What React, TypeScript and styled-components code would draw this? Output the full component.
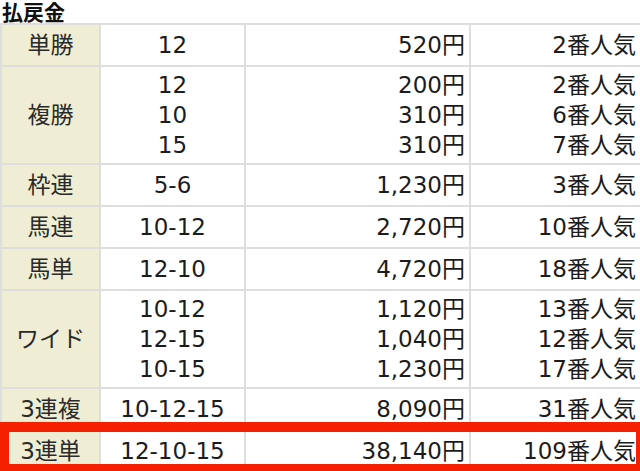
import React from 'react';
import styled, { createGlobalStyle } from 'styled-components';

const GlobalStyle = createGlobalStyle`
	html, body {
		margin: 0;
		padding: 0;
		background: #ffffff;
	}
	body {
		font-family: 'DejaVu Sans', 'Noto Sans CJK JP', sans-serif;
		color: #222;
	}
`;

interface Payout {
	type: string;
	combos: string[];
	amounts: string[];
	ranks: string[];
}

const payouts: Payout[] = [
	{ type: '単勝', combos: ['12'], amounts: ['520円'], ranks: ['2番人気'] },
	{
		type: '複勝',
		combos: ['12', '10', '15'],
		amounts: ['200円', '310円', '310円'],
		ranks: ['2番人気', '6番人気', '7番人気'],
	},
	{ type: '枠連', combos: ['5-6'], amounts: ['1,230円'], ranks: ['3番人気'] },
	{ type: '馬連', combos: ['10-12'], amounts: ['2,720円'], ranks: ['10番人気'] },
	{ type: '馬単', combos: ['12-10'], amounts: ['4,720円'], ranks: ['18番人気'] },
	{
		type: 'ワイド',
		combos: ['10-12', '12-15', '10-15'],
		amounts: ['1,120円', '1,040円', '1,230円'],
		ranks: ['13番人気', '12番人気', '17番人気'],
	},
	{ type: '3連複', combos: ['10-12-15'], amounts: ['8,090円'], ranks: ['31番人気'] },
	{ type: '3連単', combos: ['12-10-15'], amounts: ['38,140円'], ranks: ['109番人気'] },
];

const Wrapper = styled.div`
	position: relative;
	width: 640px;
`;

const Title = styled.div`
	height: 23px;
	font-family: 'Noto Sans CJK JP', sans-serif;
	font-size: 21px;
	line-height: 23px;
	font-weight: 700;
	color: #111;
	padding-left: 2px;
`;

const Table = styled.table`
	width: 640px;
	table-layout: fixed;
	border-collapse: collapse;
	font-size: 23px;

	td {
		border: 2px solid #dedede;
		height: 34px;
		padding: 3px 4px;
		line-height: 30px;
		vertical-align: middle;
		white-space: nowrap;
	}
`;

const TypeCell = styled.td`
	background: #efedd3;
	text-align: center;
	color: #2a2a2a;
`;

const Cell = styled.td<{ align: 'center' | 'right' }>`
	background: #ffffff;
	text-align: ${(props) => props.align};
	color: #1c1c1c;
`;

const Line = styled.span`
	display: block;
	height: 30px;
	overflow: hidden;
`;

const Highlight = styled.div`
	position: absolute;
	left: 0;
	right: 0;
	top: 422px;
	height: 49px;
	box-sizing: border-box;
	border-style: solid;
	border-color: #f42000;
	border-width: 10px 4px 7px 9px;
	pointer-events: none;
`;

const Lines = ({ items }: { items: string[] }) => (
	<>
		{items.map((item, index) => (
			<Line key={index}>{item}</Line>
		))}
	</>
);

export default function App() {
	return (
		<>
			<GlobalStyle />
			<Wrapper>
				<Title>払戻金</Title>
				<Table>
					<colgroup>
						<col style={{ width: 99 }} />
						<col style={{ width: 145 }} />
						<col style={{ width: 225 }} />
						<col style={{ width: 171 }} />
					</colgroup>
					<tbody>
						{payouts.map((row) => (
							<tr key={row.type}>
								<TypeCell>{row.type}</TypeCell>
								<Cell align='center'>
									<Lines items={row.combos} />
								</Cell>
								<Cell align='right'>
									<Lines items={row.amounts} />
								</Cell>
								<Cell align='right'>
									<Lines items={row.ranks} />
								</Cell>
							</tr>
						))}
					</tbody>
				</Table>
				<Highlight />
			</Wrapper>
		</>
	);
}
